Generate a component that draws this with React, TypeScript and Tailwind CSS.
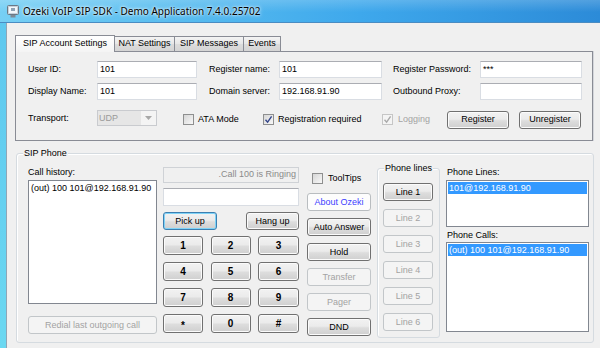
import React from 'react'

type BtnKind = 'normal' | 'disabled' | 'focus' | 'link'

const btnKinds: Record<BtnKind, string> = {
  normal:
    'border-[#707070] bg-[linear-gradient(#f2f2f2,#ebebeb_45%,#dddddd_55%,#cfcfcf)] shadow-[inset_0_0_0_1px_#fbfbfb] text-black',
  disabled: 'border-[#c2c6c9] bg-[#f4f4f4] text-[#a3a3a3]',
  focus:
    'border-[#3c7fb1] bg-[linear-gradient(#f2f2f2,#ebebeb_45%,#dddddd_55%,#cfcfcf)] shadow-[inset_0_0_0_1px_#7fd3f7] text-black',
  link: 'border-[#b9bdc0] bg-[#fdfdfd] text-[#4040ff]',
}

function Btn({
  children,
  kind = 'normal',
  className = '',
}: {
  children: React.ReactNode
  kind?: BtnKind
  className?: string
}) {
  return (
    <div
      className={`flex items-center justify-center rounded-[3px] border leading-none ${btnKinds[kind]} ${className}`}
    >
      {children}
    </div>
  )
}

function TextBox({ value = '', className = '' }: { value?: string; className?: string }) {
  return (
    <div
      className={`h-[17px] flex items-center px-[2px] bg-white border border-[#d9dde3] border-t-[#abadb3] ${className}`}
    >
      {value}
    </div>
  )
}

function Check({ checked = false, disabled = false }: { checked?: boolean; disabled?: boolean }) {
  return (
    <span
      className={`w-[11px] h-[11px] shrink-0 flex items-center justify-center border ${
        disabled
          ? 'border-[#c6c6c6] bg-[#f4f4f4]'
          : 'border-[#8e8f8f] bg-[linear-gradient(135deg,#d6d6d6,#f8f8f8)]'
      }`}
    >
      {checked && (
        <svg width="9" height="9" viewBox="0 0 9 9">
          <path
            d="M1.5 4.8 L3.6 7.2 L7.6 1.4"
            fill="none"
            stroke={disabled ? '#a9a9a9' : '#34468a'}
            strokeWidth="1.4"
          />
        </svg>
      )}
    </span>
  )
}

function Label({ children, className = '' }: { children: React.ReactNode; className?: string }) {
  return <span className={`shrink-0 leading-[17px] ${className}`}>{children}</span>
}

function ListBox({
  items,
  selected,
  className = '',
}: {
  items: string[]
  selected?: number
  className?: string
}) {
  return (
    <div className={`bg-white border border-[#828790] p-[1px] ${className}`}>
      {items.map((it, i) => (
        <div
          key={it}
          className={`h-[12px] leading-[12px] px-[1px] whitespace-nowrap ${
            i === selected ? 'bg-[#3399ff] text-white' : 'text-black'
          }`}
        >
          {it}
        </div>
      ))}
    </div>
  )
}

function TitleBar() {
  return (
    <div className="h-[23px] shrink-0 flex items-center border-b border-[#4a8cc2] bg-[linear-gradient(rgba(255,255,255,0.18),rgba(255,255,255,0)_55%),linear-gradient(90deg,#76cff4,#58bcef_30%,#3ea8ec_60%,#2c8bd8)]">
      <svg className="ml-[7px]" width="12" height="13" viewBox="0 0 12 13">
        <rect x="0.5" y="0.5" width="11" height="9" rx="1" fill="#c7d1da" stroke="#6b7885" />
        <rect x="2" y="2" width="8" height="6" fill="#f3f7fa" />
        <rect x="4" y="3" width="4" height="3" fill="#8fa3b5" />
        <rect x="3.5" y="10" width="5" height="2.5" fill="#7d8a96" />
      </svg>
      <span className="ml-[4px] text-[10px] leading-none font-['Noto_Sans',sans-serif] [text-shadow:0_0_4px_#fff,0_0_2px_#fff]">
        Ozeki VoIP SIP SDK - Demo Application 7.4.0.25702
      </span>
    </div>
  )
}

function Tabs() {
  return (
    <div className="flex items-end h-[16px] relative z-10">
      <div className="w-[100px] h-[17px] -mb-px flex items-center justify-center border border-b-0 border-[#898c95] bg-[linear-gradient(#ffffff,#f4f4f4)]">
        SIP Account Settings
      </div>
      <div className="w-[61px] h-[15px] -ml-px flex items-center justify-center border border-b-0 border-[#898c95] bg-[linear-gradient(#f4f4f4,#e6e6e6_50%,#dcdcdc_50%,#d4d4d4)]">
        NAT Settings
      </div>
      <div className="w-[70px] h-[15px] -ml-px flex items-center justify-center border border-b-0 border-[#898c95] bg-[linear-gradient(#f4f4f4,#e6e6e6_50%,#dcdcdc_50%,#d4d4d4)]">
        SIP Messages
      </div>
      <div className="w-[38px] h-[15px] -ml-px flex items-center justify-center border border-b-0 border-[#898c95] bg-[linear-gradient(#f4f4f4,#e6e6e6_50%,#dcdcdc_50%,#d4d4d4)]">
        Events
      </div>
    </div>
  )
}

function AccountPage() {
  return (
    <div className="w-[578px] h-[90px] border border-[#898c95] bg-[#f0f0f0] pl-[12px] pt-[9px] shadow-[1px_0_0_#d4d6db]">
      <div className="flex h-[17px] items-center">
        <Label className="w-[69px]">User ID:</Label>
        <TextBox value="101" className="w-[100px]" />
        <Label className="ml-[12px] w-[70px]">Register name:</Label>
        <TextBox value="101" className="w-[103px]" />
        <Label className="ml-[11px] w-[87px]">Register Password:</Label>
        <TextBox value="***" className="w-[102px]" />
      </div>
      <div className="flex h-[17px] items-center mt-[5px]">
        <Label className="w-[69px]">Display Name:</Label>
        <TextBox value="101" className="w-[100px]" />
        <Label className="ml-[12px] w-[70px]">Domain server:</Label>
        <TextBox value="192.168.91.90" className="w-[103px]" />
        <Label className="ml-[11px] w-[87px]">Outbound Proxy:</Label>
        <TextBox className="w-[102px]" />
      </div>
      <div className="flex h-[19px] items-center mt-[10px]">
        <Label className="w-[69px] self-start leading-[16px]">Transport:</Label>
        <div className="w-[60px] h-[16px] self-start flex border border-[#c9cbcf] bg-[#f4f4f4] text-[#9a9a9a]">
          <span className="w-[43px] pl-[1px] leading-[14px] bg-[#e6e6e6]">UDP</span>
          <span className="flex-1 flex items-center justify-center">
            <svg width="7" height="4" viewBox="0 0 7 4">
              <path d="M0 0 H7 L3.5 4 Z" fill="#a8a8a8" />
            </svg>
          </span>
        </div>
        <div className="ml-[26px] w-[80px] flex items-center gap-[4px]">
          <Check />
          <span>ATA Mode</span>
        </div>
        <div className="w-[119px] flex items-center gap-[4px]">
          <Check checked />
          <span>Registration required</span>
        </div>
        <div className="w-[65px] flex items-center gap-[5px] text-[#a3a3a3]">
          <Check checked disabled />
          <span>Logging</span>
        </div>
        <Btn className="w-[62px] h-[18px]">Register</Btn>
        <Btn className="ml-[10px] w-[62px] h-[18px]">Unregister</Btn>
      </div>
    </div>
  )
}

const keys = ['1', '2', '3', '4', '5', '6', '7', '8', '9', '*', '0', '#']

function PhoneGroup() {
  return (
    <div className="relative ml-[9px] mt-[12px] w-[578px] h-[190px] rounded-[3px] border border-[#d5dbe0] shadow-[inset_1px_1px_0_#fff]">
      <span className="absolute left-[6px] -top-[7px] px-[1px] leading-[13px] bg-[#f0f0f0]">SIP Phone</span>
      <div className="flex pl-[11px] pt-[12px]">
        {/* call history */}
        <div className="w-[129px] flex flex-col">
          <span className="h-[13px] leading-[13px]">Call history:</span>
          <ListBox items={['(out) 100 101@192.168.91.90']} className="mt-[1px] h-[124px]" />
          <Btn kind="disabled" className="mt-[12px] h-[18px]">
            Redial last outgoing call
          </Btn>
        </div>

        {/* dialer */}
        <div className="ml-[6px] w-[136px] flex flex-col">
          <div className="mt-[1px] h-[16px] flex items-center justify-end pr-[2px] border border-[#cfd2d6] bg-[#f0f0f0] text-[#8a8a8a]">
            .Call 100 is Ringing
          </div>
          <TextBox className="mt-[5px] h-[18px]" />
          <div className="mt-[6px] flex justify-between">
            <Btn kind="focus" className="w-[54px] h-[18px]">
              Pick up
            </Btn>
            <Btn className="w-[53px] h-[18px]">Hang up</Btn>
          </div>
          <div className="mt-[6px] grid grid-cols-[40px_40px_41px] justify-between gap-y-[7px]">
            {keys.map((k) => (
              <Btn
                key={k}
                className={k === '*' ? 'h-[19px] text-[10px] font-bold pt-[4px]' : 'h-[19px] text-[10px] font-bold'}
              >
                {k}
              </Btn>
            ))}
          </div>
        </div>

        {/* options */}
        <div className="ml-[8px] w-[64px] flex flex-col">
          <div className="mt-[6px] h-[13px] pl-[5px] flex items-center gap-[5px]">
            <Check />
            <span>ToolTips</span>
          </div>
          <div className="mt-[8px] flex flex-col gap-[7px]">
            <Btn kind="link" className="h-[18px]">
              About Ozeki
            </Btn>
            <Btn className="h-[18px]">Auto Answer</Btn>
            <Btn className="h-[18px]">Hold</Btn>
            <Btn kind="disabled" className="h-[18px]">
              Transfer
            </Btn>
            <Btn kind="disabled" className="h-[18px]">
              Pager
            </Btn>
            <Btn className="h-[18px]">DND</Btn>
          </div>
        </div>

        {/* phone lines */}
        <div className="relative ml-[6px] mt-[2px] w-[63px] h-[170px] rounded-[3px] border border-[#d5dbe0] shadow-[inset_1px_1px_0_#fff]">
          <span className="absolute left-[6px] -top-[7px] px-[1px] leading-[13px] bg-[#f0f0f0]">Phone lines</span>
          <div className="pl-[5px] pt-[14px] flex flex-col gap-[8px]">
            <Btn className="w-[50px] h-[18px]">Line 1</Btn>
            {['Line 2', 'Line 3', 'Line 4', 'Line 5', 'Line 6'].map((l) => (
              <Btn key={l} kind="disabled" className="w-[50px] h-[18px]">
                {l}
              </Btn>
            ))}
          </div>
        </div>

        {/* lines / calls */}
        <div className="ml-[6px] w-[143px] flex flex-col">
          <span className="h-[13px] leading-[13px] pl-[1px]">Phone Lines:</span>
          <ListBox items={['101@192.168.91.90']} selected={0} className="mt-[1px] h-[47px]" />
          <span className="mt-[2px] h-[13px] leading-[13px] pl-[1px]">Phone Calls:</span>
          <ListBox items={['(out) 100 101@192.168.91.90']} selected={0} className="h-[90px]" />
        </div>
      </div>
    </div>
  )
}

export default function App() {
  return (
    <div className="w-[600px] h-[348px] overflow-hidden flex flex-col bg-[#f0f0f0] text-[9px] text-black font-['Liberation_Sans',Arial,sans-serif]">
      <TitleBar />
      <div className="flex flex-1 min-h-0">
        <div className="w-[7px] shrink-0 border-r border-[#8fa6b6] bg-[linear-gradient(#5ec8ef,#6bd8f1)]" />
        <div className="flex-1 flex flex-col pl-[8px] pt-[12px]">
          <Tabs />
          <AccountPage />
          <div className="-ml-[8px]">
            <PhoneGroup />
          </div>
        </div>
      </div>
    </div>
  )
}
